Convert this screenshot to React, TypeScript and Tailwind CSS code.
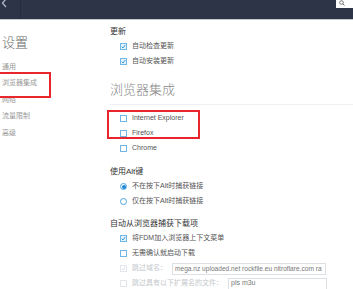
import React from "react";

const FONT = { fontFamily: '"Liberation Sans", "Noto Sans CJK SC", sans-serif' };

function Check({ checked, disabled }: { checked?: boolean; disabled?: boolean }) {
  const border = disabled ? "border-[#e3e6ea]" : "border-[#6fb8e6]";
  const bg = checked && !disabled ? "bg-[#e3f2fc]" : "bg-white";
  return (
    <div className={`w-[7px] h-[7px] border ${border} ${bg} flex items-center justify-center shrink-0`}>
      {checked && (
        <svg width="5" height="5" viewBox="0 0 10 10">
          <polyline points="1.5,5.5 4,8 8.5,2" fill="none" stroke={disabled ? "#d6dadf" : "#2d8fd8"} strokeWidth="1.8" />
        </svg>
      )}
    </div>
  );
}

function Radio({ checked }: { checked?: boolean }) {
  return (
    <div className="w-[7px] h-[7px] rounded-full border border-[#4aa3df] bg-white flex items-center justify-center shrink-0">
      {checked && <div className="w-[4px] h-[4px] rounded-full bg-[#1e88d6]" />}
    </div>
  );
}

function Row({ children, muted }: { children: React.ReactNode; muted?: boolean }) {
  return (
    <div className={`h-[15px] flex items-center pl-[10px] gap-[5px] text-[7px] whitespace-nowrap ${muted ? "text-[#c4c7cc]" : "text-[#555]"}`}>
      {children}
    </div>
  );
}

export default function App() {
  return (
    <div className="w-[353px] h-[289px] overflow-hidden bg-white relative" style={FONT}>
      {/* header */}
      <div className="h-[19px] bg-[#2d3448] flex items-start relative">
        <div className="w-[21px] h-full flex items-start pl-[1px] border-r border-[#262c3e]">
          <svg width="7" height="8" viewBox="0 0 7 8">
            <polyline points="5,-1 1.5,3 5,7" fill="none" stroke="#aeb6c8" strokeWidth="1.3" />
          </svg>
        </div>
        <div className="flex-1" />
        <div className="w-[17px] h-[8px] bg-white flex items-start pl-[3px]">
          <svg width="6" height="6" viewBox="0 0 12 12">
            <circle cx="5" cy="5" r="3.6" fill="none" stroke="#555" strokeWidth="1.6" />
            <line x1="7.6" y1="7.6" x2="11" y2="11" stroke="#555" strokeWidth="1.8" />
          </svg>
        </div>
      </div>
      <div className="h-[1px] bg-[#c3c7cf]" />

      <div className="flex">
        {/* left nav */}
        <div className="w-[110px] shrink-0 pl-[2px] pt-[13px]">
          <div className="h-[18px] flex items-center text-[13px] text-[#666] font-light" style={{ fontFamily: '"Noto Sans CJK SC", sans-serif' }}>
            设置
          </div>
          <div className="mt-[7.5px] text-[7px] text-[#999]">
            <div className="h-[16.5px] flex items-center">通用</div>
            <div className="h-[16.5px] flex items-center">浏览器集成</div>
            <div className="h-[16.5px] flex items-center">网络</div>
            <div className="h-[16.5px] flex items-center">流量限制</div>
            <div className="h-[16.5px] flex items-center">高级</div>
          </div>
        </div>

        {/* right content */}
        <div className="flex-1 min-w-0 pt-[4px]">
          <div className="h-[15px] flex items-center text-[8px] text-[#333]">更新</div>
          <Row><Check checked />自动检查更新</Row>
          <Row><Check checked />自动安装更新</Row>

          <div className="mt-[11px] h-[18px] flex items-center text-[13px] text-[#8a8a8a] font-light" style={{ fontFamily: '"Noto Sans CJK SC", sans-serif' }}>
            浏览器集成
          </div>
          <div className="mt-[6px] h-[1px] bg-[#eef0f2]" />

          <div className="mt-[6px]">
            <Row><Check />Internet Explorer</Row>
            <Row><Check />Firefox</Row>
            <Row><Check />Chrome</Row>
          </div>

          <div className="mt-[8px] h-[15px] flex items-center text-[8px] text-[#333]">使用Alt键</div>
          <Row><Radio checked />不在按下Alt时捕获链接</Row>
          <Row><Radio />仅在按下Alt时捕获链接</Row>

          <div className="mt-[7px] h-[15px] flex items-center text-[8px] text-[#333]">自动从浏览器捕获下载项</div>
          <Row><Check checked />将FDM加入浏览器上下文菜单</Row>
          <Row><Check />无需确认就启动下载</Row>
          <Row muted>
            <Check checked disabled />
            <span className="w-[35px] shrink-0">跳过域名：</span>
            <div className="w-[154px] h-[12px] shrink-0 border border-[#dcdfe3] flex items-center pl-[2px] text-[6.6px] text-[#777] overflow-hidden">
              mega.nz uploaded.net rockfile.eu nitroflare.com ra
            </div>
          </Row>
          <Row muted>
            <Check disabled />
            <span className="w-[91px] shrink-0">跳过具有以下扩展名的文件：</span>
            <div className="w-[99px] h-[12px] shrink-0 border border-[#dcdfe3] flex items-center pl-[2px] text-[#777]">
              pls m3u
            </div>
          </Row>
        </div>
      </div>

      {/* annotation boxes */}
      <div className="absolute left-[-4px] top-[72px] w-[55px] h-[26px] border-2 border-[#e8262c]" />
      <div className="absolute left-[107px] top-[110px] w-[93px] h-[29px] border-2 border-[#e8262c]" />
    </div>
  );
}
